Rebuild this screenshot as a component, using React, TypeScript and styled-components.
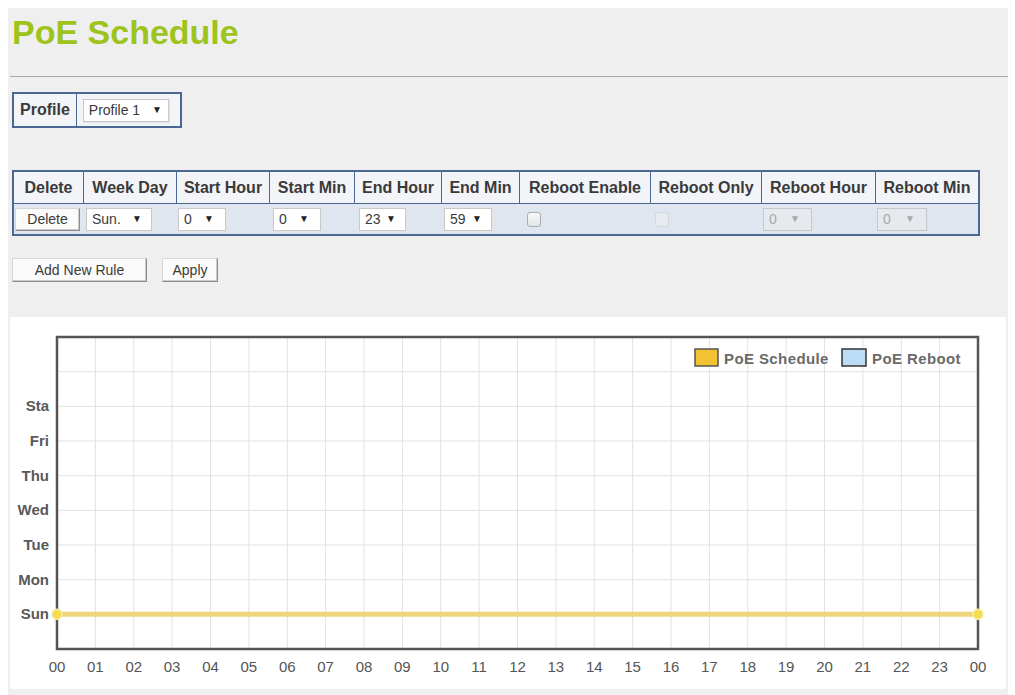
import React from 'react';
import styled, { createGlobalStyle } from 'styled-components';

const GlobalStyle = createGlobalStyle`
  html, body {
    background: #fff;
  }
  body {
    margin: 8px 0 0 8px;
    font-family: "Liberation Sans", Arial, sans-serif;
    color: #333;
  }
`;

const Page = styled.div`
  width: 1000px;
  min-height: 687px;
  background: #efefef;
  overflow: hidden;
`;

const Content = styled.div`
  padding: 4px 0 0 4px;
`;

const Title = styled.h1`
  margin: 0;
  height: 40px;
  font-size: 34px;
  line-height: 40px;
  font-weight: bold;
  color: #9dc41d;
`;

const Divider = styled.hr`
  margin: 24px 0 0 -2px;
  height: 0;
  border: 0;
  border-top: 1px solid #a9a9a9;
`;

const BoxTable = styled.table<{ $top: number; $width?: number }>`
  margin-top: ${p => p.$top}px;
  border: 2px solid #4a6893;
  border-collapse: separate;
  border-spacing: 0;
  ${p => (p.$width ? `width: ${p.$width}px; table-layout: fixed;` : '')}
`;

const HeadCell = styled.th<{ $first?: boolean; $underline?: boolean }>`
  height: ${p => (p.$underline ? 31 : 32)}px;
  padding: 0 6px;
  background: #f2f4f7;
  border-left: ${p => (p.$first ? 'none' : '1px solid #4a6893')};
  border-bottom: ${p => (p.$underline ? '1px solid #4a6893' : 'none')};
  font-size: 16px;
  font-weight: bold;
  color: #3a3a3a;
  text-align: center;
  white-space: nowrap;
`;

const ProfileCell = styled.td`
  padding: 0 11px 0 6px;
  background: #f2f4f7;
  border-left: 1px solid #4a6893;
`;

const DataCell = styled.td<{ $pad?: number }>`
  height: 30px;
  padding: 0 0 0 ${p => p.$pad ?? 3}px;
  background: #dfe6ef;
  vertical-align: middle;
  white-space: nowrap;
`;

const SelectWrap = styled.span<{ $w: number }>`
  position: relative;
  display: inline-block;
  vertical-align: middle;
  width: ${p => p.$w}px;
  height: 23px;
`;

const Select = styled.select`
  appearance: none;
  -webkit-appearance: none;
  width: 100%;
  height: 100%;
  margin: 0;
  padding: 0 0 0 5px;
  border: 1px solid #c9c9c9;
  border-radius: 0;
  background: #fff;
  font-family: "Liberation Sans", Arial, sans-serif;
  font-size: 14px;
  color: #3a3a3a;
  box-shadow: 1px 1px 0 #e4e4e4;

  &:disabled {
    background: #e6e9ed;
    border-color: #c4c7cb;
    color: #a8a8a8;
    opacity: 1;
  }
`;

const Arrow = styled.span<{ $right: number; $disabled?: boolean }>`
  position: absolute;
  right: ${p => p.$right}px;
  top: 5px;
  font-size: 10px;
  line-height: 12px;
  color: ${p => (p.$disabled ? '#a8a8a8' : '#222')};
  pointer-events: none;
`;

const Check = styled.input`
  appearance: none;
  -webkit-appearance: none;
  display: inline-block;
  vertical-align: middle;
  width: 14px;
  height: 15px;
  margin: 0;
  border: 1px solid #a9adb2;
  border-radius: 3px;
  background: linear-gradient(#fafafa, #e1e4e8);

  &:disabled {
    border-color: #d3d6da;
    background: #e8ebef;
  }
`;

const OldButton = styled.button<{ $w: number; $h?: number }>`
  width: ${p => p.$w}px;
  height: ${p => p.$h ?? 24}px;
  margin: 0;
  padding: 0;
  background: #fbfbfb;
  border: 1px solid #d6d6d6;
  border-right-color: #8c8c8c;
  border-bottom-color: #8c8c8c;
  box-shadow: inset -1px -1px 0 #c9c9c9;
  font-family: "Liberation Sans", Arial, sans-serif;
  font-size: 14px;
  color: #3a3a3a;
  cursor: pointer;
`;

const ButtonRow = styled.div`
  display: flex;
  gap: 15px;
  margin-top: 22px;
`;

const ChartPanel = styled.div`
  margin: 35px 0 0 2px;
  width: 996px;
  height: 372px;
  background: #fff;
`;

const DayLabel = styled.text`
  font-family: "Liberation Sans", Arial, sans-serif;
  font-size: 15px;
  font-weight: bold;
  fill: #595959;
`;

const HourLabel = styled.text`
  font-family: "Liberation Sans", Arial, sans-serif;
  font-size: 15px;
  fill: #555;
`;

const LegendText = styled.text`
  font-family: "Liberation Sans", Arial, sans-serif;
  font-size: 15px;
  font-weight: bold;
  letter-spacing: 0.4px;
  fill: #6a6a6a;
`;

type Sel = { w: number; value: string; disabled?: boolean; arrow?: number };

const SelectBox = ({ w, value, disabled, arrow = 10 }: Sel) => (
  <SelectWrap $w={w}>
    <Select disabled={disabled} defaultValue={value}>
      <option value={value}>{value}</option>
    </Select>
    <Arrow $right={arrow} $disabled={disabled}>▼</Arrow>
  </SelectWrap>
);

const COLUMNS: [string, number][] = [
  ['Delete', 69],
  ['Week Day', 93],
  ['Start Hour', 93],
  ['Start Min', 85],
  ['End Hour', 87],
  ['End Min', 78],
  ['Reboot Enable', 131],
  ['Reboot Only', 111],
  ['Reboot Hour', 114],
  ['Reboot Min', 103],
];

const DAYS = ['Sta', 'Fri', 'Thu', 'Wed', 'Tue', 'Mon', 'Sun'];
const HOURS = Array.from({ length: 25 }, (_, i) => String(i % 24).padStart(2, '0'));

const X0 = 47;
const X1 = 968;
const Y0 = 20;
const Y1 = 332;
const COL = (X1 - X0) / 24;
const ROW = (Y1 - Y0) / 9;

const ScheduleChart = () => {
  const sunY = Y0 + ROW * 8;
  return (
    <svg width="996" height="372" viewBox="0 0 996 372">
      {Array.from({ length: 23 }, (_, i) => (
        <line key={'v' + i} x1={X0 + COL * (i + 1)} x2={X0 + COL * (i + 1)} y1={Y0} y2={Y1} stroke="#e1e1e1" strokeWidth="1" />
      ))}
      {Array.from({ length: 8 }, (_, i) => (
        <line key={'h' + i} x1={X0} x2={X1} y1={Y0 + ROW * (i + 1)} y2={Y0 + ROW * (i + 1)} stroke="#e1e1e1" strokeWidth="1" />
      ))}
      <rect x={X0} y={Y0} width={X1 - X0} height={Y1 - Y0} fill="none" stroke="#555" strokeWidth="2.5" />

      {DAYS.map((d, i) => (
        <DayLabel key={d} x={39} y={Y0 + ROW * (i + 2) + 5} textAnchor="end">{d}</DayLabel>
      ))}
      {HOURS.map((h, i) => (
        <HourLabel key={i} x={X0 + COL * i} y={355} textAnchor="middle">{h}</HourLabel>
      ))}

      <line x1={X0} x2={X1} y1={sunY} y2={sunY} stroke="#f0d67a" strokeWidth="5" />
      <circle cx={X0} cy={sunY} r="5" fill="#f4dc50" stroke="#f8eca0" strokeWidth="1.5" />
      <circle cx={X1} cy={sunY} r="5" fill="#f4dc50" stroke="#f8eca0" strokeWidth="1.5" />

      <rect x={685} y={32} width={23} height={17} fill="#f2c232" stroke="#555" strokeWidth="1.5" />
      <LegendText x={714} y={47}>PoE Schedule</LegendText>
      <rect x={832} y={32} width={24} height={17} fill="#bcdcf5" stroke="#333" strokeWidth="1.5" />
      <LegendText x={862} y={47}>PoE Reboot</LegendText>
    </svg>
  );
};

export default function App() {
  return (
    <>
      <GlobalStyle />
      <Page>
        <Content>
          <Title>PoE Schedule</Title>
          <Divider />

          <BoxTable $top={15}>
            <tbody>
              <tr>
                <HeadCell $first>Profile</HeadCell>
                <ProfileCell>
                  <SelectBox w={86} value="Profile 1" arrow={7} />
                </ProfileCell>
              </tr>
            </tbody>
          </BoxTable>

          <BoxTable $top={42} $width={968}>
            <colgroup>
              {COLUMNS.map(([name, w]) => (
                <col key={name} style={{ width: w }} />
              ))}
            </colgroup>
            <thead>
              <tr>
                {COLUMNS.map(([name], i) => (
                  <HeadCell key={name} $first={i === 0} $underline>{name}</HeadCell>
                ))}
              </tr>
            </thead>
            <tbody>
              <tr>
                <DataCell $pad={1}><OldButton $w={65} $h={23}>Delete</OldButton></DataCell>
                <DataCell><SelectBox w={66} value="Sun." /></DataCell>
                <DataCell $pad={2}><SelectBox w={48} value="0" arrow={12} /></DataCell>
                <DataCell $pad={4}><SelectBox w={48} value="0" arrow={12} /></DataCell>
                <DataCell $pad={5}><SelectBox w={47} value="23" /></DataCell>
                <DataCell $pad={3}><SelectBox w={48} value="59" /></DataCell>
                <DataCell $pad={8}><Check type="checkbox" /></DataCell>
                <DataCell $pad={5}><Check type="checkbox" disabled /></DataCell>
                <DataCell $pad={2}><SelectBox w={49} value="0" arrow={12} disabled /></DataCell>
                <DataCell $pad={2}><SelectBox w={50} value="0" arrow={12} disabled /></DataCell>
              </tr>
            </tbody>
          </BoxTable>

          <ButtonRow>
            <OldButton $w={135}>Add New Rule</OldButton>
            <OldButton $w={56}>Apply</OldButton>
          </ButtonRow>
        </Content>

        <ChartPanel>
          <ScheduleChart />
        </ChartPanel>
      </Page>
    </>
  );
}
